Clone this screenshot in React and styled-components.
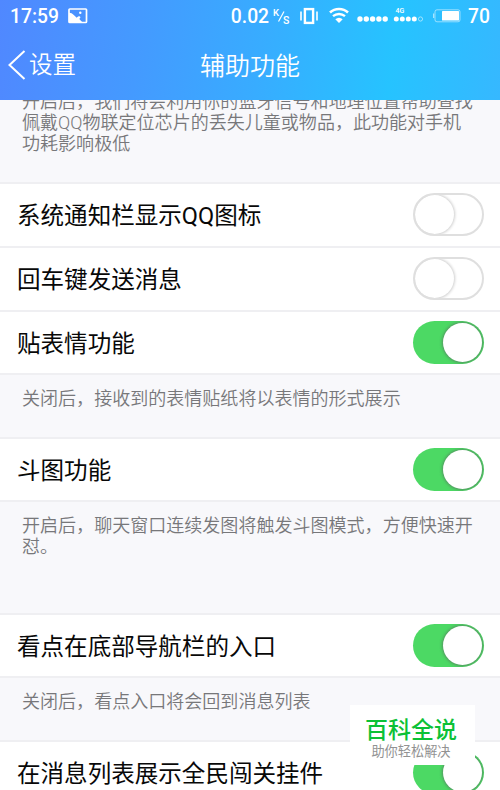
import { useState } from 'react';
import styled, { createGlobalStyle } from 'styled-components';

const GlobalStyle = createGlobalStyle`
  * {
    box-sizing: border-box;
  }
  body {
    margin: 0;
    background: #f8f8fb;
    font-family: Roboto, 'Noto Sans CJK SC', sans-serif;
  }
`;

const Screen = styled.main`
  position: relative;
  width: 500px;
  height: 790px;
  overflow: hidden;
  background: #f8f8fb;
`;

const Header = styled.header`
  height: 100px;
  color: #fff;
  background: linear-gradient(97deg, #5088ff 0%, #449aff 28%, #38acff 52%, #26c3ff 78%, #36b8ff 100%);
`;

const StatusBar = styled.div`
  display: flex;
  align-items: center;
  height: 32px;
  padding: 0 10px;
  font-size: 19.3px;
  font-weight: 500;
  line-height: 32px;

  span {
    padding-top: 1px;
  }
  svg {
    display: block;
    flex: none;
  }
  .photo {
    margin-left: 9px;
  }
  .speed {
    margin-left: auto;
  }
  .unit {
    margin-left: 4px;
  }
  .vibrate {
    margin-left: 10px;
  }
  .wifi {
    margin-left: 11px;
  }
  .signal {
    margin-left: 8px;
  }
  .battery {
    margin-left: 9px;
    margin-right: 7px;
  }
`;

const NavBar = styled.nav`
  display: grid;
  grid-template-columns: 1fr auto 1fr;
  align-items: center;
  height: 66px;
  padding: 0 8px;
`;

const Back = styled.button`
  display: flex;
  align-items: center;
  gap: 3px;
  padding: 0;
  border: 0;
  background: none;
  color: inherit;
  font-family: inherit;
  font-size: 23.5px;
  font-weight: 350;
  line-height: 34px;
  cursor: pointer;
`;

const Title = styled.h1`
  margin: 0;
  padding-top: 3px;
  font-size: 25px;
  font-weight: 350;
  line-height: 34px;
`;

const Row = styled.div`
  display: flex;
  align-items: center;
  justify-content: space-between;
  height: ${({ $height }) => $height || 64}px;
  padding: 0 16px 1px 17px;
  background: #fff;
  border-bottom: 2px solid #efeff2;
  color: #080808;
  font-size: 23.55px;
  line-height: 34px;
  white-space: nowrap;
`;

const Label = styled.span`
  padding-top: 3px;
`;

const Note = styled.p`
  height: ${({ $height }) => $height}px;
  margin: 0;
  padding: 13px 20px 0 22px;
  border-bottom: 2px solid #efeff2;
  color: #77777a;
  font-size: 18.05px;
  font-weight: 350;
  line-height: 21px;
  white-space: pre-line;
`;

// scrolled partly under the header, so its first line is cut
const ScrolledNote = styled(Note)`
  display: flex;
  align-items: flex-end;
  padding-top: 0;
  padding-bottom: 28px;
  overflow: hidden;
`;

const Switch = styled.button`
  flex: none;
  display: flex;
  align-items: center;
  justify-content: ${({ $on }) => ($on ? 'flex-end' : 'flex-start')};
  width: 71px;
  height: 43px;
  padding: ${({ $on }) => ($on ? '0 2px' : '0')};
  border: ${({ $on }) => ($on ? '0' : '2px solid #dfdfdf')};
  border-radius: 22px;
  background: ${({ $on }) => ($on ? '#4cd964' : '#fff')};
  overflow: hidden;
  cursor: pointer;
`;

const Knob = styled.span`
  width: 39px;
  height: 39px;
  border-radius: 50%;
  background: #fff;
  box-shadow: ${({ $on }) =>
    $on ? '0 0 3px 1px rgba(90, 100, 95, 0.6)' : '0 0 3px 1px rgba(0, 0, 0, 0.2)'};
`;

const Badge = styled.aside`
  position: absolute;
  left: 350px;
  top: 705px;
  width: 125px;
  height: 60px;
  padding: 11px 3px 0 0;
  background: #fff;
  text-align: center;

  strong {
    display: block;
    color: #0cc136;
    font-size: 23px;
    font-weight: 500;
    line-height: 29px;
  }
  small {
    display: block;
    color: #929292;
    font-size: 13.2px;
    line-height: 14px;
  }
`;

const PhotoIcon = () => (
  <svg className='photo' width='20' height='16' viewBox='0 0 20 16'>
    <rect x='1' y='1' width='17.5' height='13.5' rx='0.8' fill='none' stroke='#fff' strokeWidth='1.7' />
    <path d='M1 4.8 C5 5 6.5 8 8.8 9.8 C10 8 12 7.8 12.5 9.3 L11.3 11 L14.5 14.5 H18 V15 H1Z' fill='#fff' />
    <circle cx='12.3' cy='4.7' r='1.2' fill='#fff' />
  </svg>
);

const UnitIcon = () => (
  <svg className='unit' width='17' height='17' viewBox='0 0 17 17' fill='#fff'>
    <text x='0' y='8' fontSize='9.5'>K</text>
    <path d='M5.5 13.5 L11 3.5' stroke='#fff' strokeWidth='1.2' />
    <text x='10' y='15.5' fontSize='10.5'>S</text>
  </svg>
);

const VibrateIcon = () => (
  <svg className='vibrate' width='18' height='18' viewBox='0 0 18 18' fill='none' stroke='#fff'>
    <rect x='4.9' y='2.1' width='8.2' height='13.8' strokeWidth='2.4' />
    <path d='M1 4.5 V13.5 M17 4.5 V13.5' strokeWidth='1.6' />
  </svg>
);

const WifiIcon = () => (
  <svg className='wifi' width='20' height='19' viewBox='0 0 20 19' fill='none' stroke='#fff'>
    <path d='M1 5.5 C6 0.8 14 0.8 19 5.5' strokeWidth='2.6' />
    <path d='M4 9.2 C7.5 6.2 12.5 6.2 16 9.2' strokeWidth='2.4' />
    <path d='M6.3 12.3 Q10 9.2 13.7 12.3 L10 16Z' fill='#fff' stroke='none' />
  </svg>
);

const SignalIcon = () => (
  <svg className='signal' width='67' height='20' viewBox='0 0 67 20' fill='#fff'>
    {[3, 9.3, 15.6, 21.9, 28.2].map((x) => (
      <circle key={x} cx={x} cy='13' r='2.7' />
    ))}
    {[39.3, 45.3, 51.3, 57.3].map((x) => (
      <circle key={x} cx={x} cy='13' r='2.5' />
    ))}
    <circle cx='63.5' cy='13' r='2.1' fill='none' stroke='#fff' strokeOpacity='0.65' strokeWidth='0.8' />
    <text x='38.5' y='7' fontSize='7'>4G</text>
  </svg>
);

const BatteryIcon = () => (
  <svg className='battery' width='28' height='14' viewBox='0 0 28 14'>
    <rect x='2' y='0.8' width='25' height='12' rx='2' fill='none' stroke='#fff' strokeOpacity='0.5' />
    <path d='M0.7 4.5 V9' stroke='#fff' strokeOpacity='0.7' />
    <rect x='9' y='2' width='17' height='9.6' rx='0.6' fill='#fff' />
  </svg>
);

const Setting = ({ label, on, height }) => {
  const [active, setActive] = useState(Boolean(on));

  return (
    <Row $height={height}>
      <Label>{label}</Label>
      <Switch $on={active} role='switch' aria-checked={active} onClick={() => setActive(!active)}>
        <Knob $on={active} />
      </Switch>
    </Row>
  );
};

const App = () => {
  return (
    <Screen>
      <GlobalStyle />
      <Header>
        <StatusBar>
          <span>17:59</span>
          <PhotoIcon />
          <span className='speed'>0.02</span>
          <UnitIcon />
          <VibrateIcon />
          <WifiIcon />
          <SignalIcon />
          <BatteryIcon />
          <span>70</span>
        </StatusBar>
        <NavBar>
          <Back>
            <svg width='18' height='30' viewBox='0 0 18 30' fill='none' stroke='#fff' strokeWidth='2'>
              <path d='M16.5 1 L1.5 15 L16.5 29' />
            </svg>
            设置
          </Back>
          <Title>辅助功能</Title>
        </NavBar>
      </Header>
      <ScrolledNote $height={84}>
        {'开启后，我们将会利用你的蓝牙信号和地理位置帮助查找\n佩戴QQ物联定位芯片的丢失儿童或物品，此功能对手机\n功耗影响极低'}
      </ScrolledNote>
      <Setting label='系统通知栏显示QQ图标' />
      <Setting label='回车键发送消息' />
      <Setting label='贴表情功能' on height={63} />
      <Note $height={64}>关闭后，接收到的表情贴纸将以表情的形式展示</Note>
      <Setting label='斗图功能' on height={63} />
      <Note $height={113}>{'开启后，聊天窗口连续发图将触发斗图模式，方便快速开\n怼。'}</Note>
      <Setting label='看点在底部导航栏的入口' on height={63} />
      <Note $height={64}>关闭后，看点入口将会回到消息列表</Note>
      <Setting label='在消息列表展示全民闯关挂件' on />
      <Badge>
        <strong>百科全说</strong>
        <small>助你轻松解决</small>
      </Badge>
    </Screen>
  );
};

export default App;
